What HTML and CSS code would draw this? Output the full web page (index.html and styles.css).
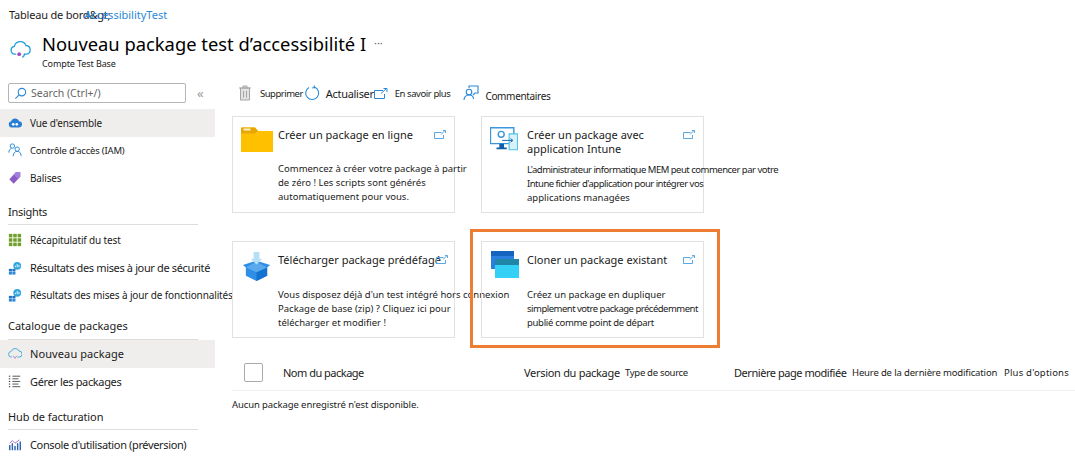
FILE: index.html
```html
<!DOCTYPE html>
<html lang="fr">
<head>
<meta charset="UTF-8" />
<title>Nouveau package test d'accessibilité</title>
<link rel="stylesheet" href="styles.css">
</head>
<body>
<!-- Page header -->
<header class="page-header">
  <div class="crumbs"><span class="crumb-dark">Tableau de bord&amp;gt;</span><a class="crumb-link">AccessibilityTest</a></div>
  <div class="title-row">
    <svg class="title-icon" viewBox="0 0 24 24" width="25" height="21" fill="none"><path d="M7 18.500H5.500a4.500 4.500 0 0 1-.6-8.900 7 7 0 0 1 13.400-1 5 5 0 0 1 .7 9.900h-3" stroke="#1f9fdc" stroke-width="1.500"/><path d="M14 22a4 4 0 0 0 2.400-4" stroke="#1f9fdc" stroke-width="1.500"/><circle cx="10.500" cy="18.500" r="2.200" fill="#a24fc4"/></svg>
    <div>
      <h1>Nouveau package test d’accessibilité I <span class="dots">···</span></h1>
      <div class="subtitle">Compte Test Base</div>
    </div>
  </div>
</header>

<div class="layout">
  <!-- Sidebar -->
  <aside class="sidebar">
    <div class="search-row">
      <div class="search">
        <svg viewBox="0 0 14 14" width="13" height="13" fill="none" stroke="#2b88d8" stroke-width="1.200"><circle cx="8.500" cy="5.500" r="4"/><path d="M5.500 8.500 1.500 12.500"/></svg>
        <span>Search (Ctrl+/)</span>
      </div>
      <span class="collapse">«</span>
    </div>

    <a class="nav-item active first">
      <svg viewBox="0 0 16 16" fill="none"><path d="M4 13a3.500 3.500 0 0 1-.5-6.900A4.800 4.800 0 0 1 12.600 6 3.500 3.500 0 0 1 12.500 13z" fill="#2a7fd4"/><circle cx="6" cy="9.500" r="1.500" fill="#fff"/><circle cx="10" cy="9.500" r="1.500" fill="#fff"/></svg>
      <span class="label-a">Vue d'ensemble</span>
    </a>
    <a class="nav-item">
      <svg viewBox="0 0 16 16" fill="none" stroke="#2b88d8" stroke-width="1.100"><circle cx="5" cy="3.500" r="2.500"/><circle cx="10.500" cy="7" r="2.500"/><path d="M1 11c0-3 1.500-4.500 3-4.500M6 15c0-3.500 2-5.500 4.500-5.500S15 11.500 15 15"/></svg>
      <span class="label-b">Contrôle d'accès (IAM)</span>
    </a>
    <a class="nav-item">
      <svg viewBox="0 0 16 16"><path d="M9 1.500h5v5l-7.500 8-5-5z" fill="#8a5bc7"/><path d="M9 1.500h5v5l-2.500 2.500-5-5z" fill="#a57fdc"/></svg>
      <span class="label-a">Balises</span>
    </a>

    <div class="nav-group group-insights">Insights</div>
    <a class="nav-item">
      <svg viewBox="0 0 16 16" fill="#6f9e2c"><rect x="1" y="1" width="4" height="4"/><rect x="6" y="1" width="4" height="4"/><rect x="11" y="1" width="4" height="4"/><rect x="1" y="6" width="4" height="4"/><rect x="6" y="6" width="4" height="4"/><rect x="11" y="6" width="4" height="4"/><rect x="1" y="11" width="4" height="4"/><rect x="6" y="11" width="4" height="4"/><rect x="11" y="11" width="4" height="4"/></svg>
      <span class="label-a">Récapitulatif du test</span>
    </a>
    <a class="nav-item">
      <svg viewBox="0 0 16 16"><circle cx="10.500" cy="5.500" r="4.500" fill="#32a8e0"/><path d="M8.500 7V5.500M10.500 7V3.500M12.500 7V4.500" stroke="#fff"/><rect x="1" y="9" width="3.500" height="3" fill="#1f6fc4"/><rect x="5" y="9" width="3.500" height="3" fill="#1f6fc4"/><rect x="1" y="12.500" width="3.500" height="3" fill="#2b88d8"/><rect x="5" y="12.500" width="3.500" height="3" fill="#2b88d8"/></svg>
      <span class="label-c">Résultats des mises à jour de sécurité</span>
    </a>
    <a class="nav-item">
      <svg viewBox="0 0 16 16"><circle cx="10.500" cy="5.500" r="4.500" fill="#32a8e0"/><path d="M8.500 7V5.500M10.500 7V3.500M12.500 7V4.500" stroke="#fff"/><rect x="1" y="9" width="3.500" height="3" fill="#1f6fc4"/><rect x="5" y="9" width="3.500" height="3" fill="#1f6fc4"/><rect x="1" y="12.500" width="3.500" height="3" fill="#2b88d8"/><rect x="5" y="12.500" width="3.500" height="3" fill="#2b88d8"/></svg>
      <span class="label-d">Résultats des mises à jour de fonctionnalités</span>
    </a>

    <div class="nav-group group-catalog">Catalogue de packages</div>
    <a class="nav-item active">
      <svg viewBox="0 0 16 16" fill="none"><path d="M4.500 11.500H4a3.200 3.200 0 0 1-.3-6.400 4.700 4.700 0 0 1 8.900-.4 3.400 3.400 0 0 1 .2 6.800h-2" stroke="#45a9dd" stroke-width="1.100"/><path d="M6 10l2 3 2-3" stroke="#b58ad0" stroke-width="1.100"/></svg>
      <span class="label-e">Nouveau package</span>
    </a>
    <a class="nav-item">
      <svg viewBox="0 0 16 16" stroke="#555" stroke-width="1.100"><path d="M5 2.500h9M5 5.500h7M5 8.500h9M5 11.500h7M5 14.500h9"/><path d="M1 2.500h2M1 5.500h2M1 8.500h2M1 11.500h2M1 14.500h2" stroke-dasharray="1.500 .5" stroke="#222"/></svg>
      <span class="label-c">Gérer les packages</span>
    </a>

    <div class="nav-group group-hub">Hub de facturation</div>
    <a class="nav-item">
      <svg viewBox="0 0 16 16"><path d="M2 14V8M5 14V6M8 14V9M11 14V6M14 14V4" stroke="#2a5fb0" stroke-width="1.600"/><path d="M2 6 5 3l3 3 5-4" stroke="#9a5fc9" stroke-width="1" fill="none"/></svg>
      <span class="label-c">Console d'utilisation (préversion)</span>
    </a>
  </aside>

  <!-- Main content -->
  <main class="main">
    <div class="toolbar">
      <span class="tool tool-delete">
        <svg viewBox="0 0 14 16" width="14" height="16" fill="#e3e3e3" stroke="#a6a6a6"><path d="M1 3h12M5 3V1h4v2M2.500 3v12h9V3z"/><path d="M5.500 6v6.500M8.500 6v6.500" fill="none"/></svg>
        <span class="tool-delete-label">Supprimer</span>
      </span>
      <span class="tool tool-refresh">
        <svg viewBox="0 0 16 16" width="16" height="16" fill="none" stroke="#2b88d8" stroke-width="1.100"><path d="M5 2.400A6.500 6.500 0 1 0 10.500 2M10 .5l.5 2-2.200.4"/></svg>
        <span class="tool-refresh-label">Actualiser</span>
      </span>
      <span class="tool tool-learn">
        <svg viewBox="0 0 14 11" width="14" height="11" fill="none" stroke="#2b88d8"><path d="M9 2.500H.5v8h10V6M7 5.500l5.500-5M9.500.5h3.500V4"/></svg>
        <span class="tool-learn-label">En savoir plus</span>
      </span>
      <span class="tool tool-feedback">
        <svg viewBox="0 0 16 16" width="16" height="16" fill="none" stroke="#2b88d8" stroke-width="1.100"><circle cx="6" cy="7" r="2.800"/><path d="M1 15c0-3 2-5 5-5s4.500 2 4.500 4M6 3V1h9v7h-3l-2 2"/></svg>
        <span class="tool-feedback-label">Commentaires</span>
      </span>
    </div>

    <section class="cards">
      <div class="card">
        <div class="card-head">
          <svg class="card-icon" viewBox="0 0 32 26" width="32" height="26"><path d="M0 2.500a1 1 0 0 1 1-1h13l3 3.500h15v21H0z" fill="#ffc000"/><path d="M0 2.500a1 1 0 0 1 1-1h13l3 3.500-3 2.500H0z" fill="#e6a700"/><rect x="2.500" y="2.500" width="7" height="2" fill="#fff2c4"/></svg>
          <h2>Créer un package en ligne</h2>
          <svg class="ext" viewBox="0 0 12 9" width="12" height="9" fill="none" stroke="#5aa7e0"><path d="M7.500 2.500H.5v6h9V5M7 4.500 10.500 1M9 .5h2.500V3"/></svg>
        </div>
        <p>Commencez à créer votre package à partir<br>de zéro ! Les scripts sont générés<br>automatiquement pour vous.</p>
      </div>

      <div class="card">
        <div class="card-head">
          <svg class="card-icon" viewBox="0 0 30 27" width="28" height="26"><path d="M.5 1.500h25v17H.5z" fill="#fff" stroke="#3a96dd" stroke-width="1.500"/><circle cx="12" cy="8.500" r="3.200" fill="#fff" stroke="#3a96dd" stroke-width="1.500"/><path d="M10 18.500h5v4h3v2H7v-2h3z" fill="#0f5fa8"/><path d="M20.500 8h9v17h-9z" fill="#d8f1fb" stroke="#4fc3e8" stroke-width="1.200"/><path d="M13 15h11M22 13l2.500 2-2.500 2" stroke="#0f5fa8" fill="none"/></svg>
          <h2>Créer un package avec<br>application Intune</h2>
          <svg class="ext" viewBox="0 0 12 9" width="12" height="9" fill="none" stroke="#5aa7e0"><path d="M7.500 2.500H.5v6h9V5M7 4.500 10.500 1M9 .5h2.500V3"/></svg>
        </div>
        <p class="p-low"><span class="tight">L'administrateur informatique MEM peut commencer par votre<br>Intune fichier d'application pour intégrer vos</span><br>applications managées</p>
      </div>

      <div class="card">
        <div class="card-head">
          <svg class="card-icon" viewBox="0 0 32 32" width="31" height="31"><path d="M16 10 30 14.500 27 17v8.500L16 31 5 25.500V17L2 14.500z" fill="#2f8ee6"/><path d="M16 17v14l11-5.500V17z" fill="#1273d1"/><path d="M5 17l11 5 11-5-11-6z" fill="#5aa9ec"/><path d="M13 1h6v7h3l-6 6-6-6h3z" fill="#b6def7"/></svg>
          <h2>Télécharger package prédéfagé</h2>
          <svg class="ext ext-near" viewBox="0 0 12 9" width="12" height="9" fill="none" stroke="#5aa7e0"><path d="M7.500 2.500H.5v6h9V5M7 4.500 10.500 1M9 .5h2.500V3"/></svg>
        </div>
        <p class="p-low">Vous disposez déjà d'un test intégré hors connexion<br>Package de base (zip) ? Cliquez ici pour<br>télécharger et modifier !</p>
      </div>

      <div class="card">
        <div class="card-head">
          <svg class="card-icon" viewBox="0 0 28 27" width="30" height="27"><rect x="0" y="0" width="23" height="18" fill="#2b7fe0"/><rect x="0" y="0" width="23" height="5" fill="#1565c0"/><rect x="4" y="8" width="24" height="19" fill="#35d0f5"/><rect x="4" y="8" width="24" height="6" fill="#1f86a8"/></svg>
          <h2>Cloner un package existant</h2>
          <svg class="ext" viewBox="0 0 12 9" width="12" height="9" fill="none" stroke="#5aa7e0"><path d="M7.500 2.500H.5v6h9V5M7 4.500 10.500 1M9 .5h2.500V3"/></svg>
        </div>
        <p class="p-low">Créez un package en dupliquer<br><span class="tight">simplement votre package précédemment</span><br><span class="tight-sm">publié comme point de départ</span></p>
        <div class="callout"></div>
      </div>
    </section>

    <section class="table-head">
      <span class="check"></span>
      <span class="col-name">Nom du package</span>
      <span class="col-version">Version du package</span>
      <span class="col-type">Type de source</span>
      <span class="col-page">Dernière page modifiée</span>
      <span class="col-time">Heure de la dernière modification</span>
      <span class="col-more">Plus d'options</span>
    </section>
    <div class="empty">Aucun package enregistré n'est disponible.</div>
  </main>
</div>
</body>
</html>
```

FILE: styles.css
```css
/* General */
html, body {
  height: 460px;
  overflow: hidden;
}
body {
  margin: 0;
  font-family: "Noto Sans", "Open Sans", sans-serif;
  color: #1b1b1b;
  background-color: #fff;
}

/* Header */
.page-header {
  height: 76px;
  padding: 7px 0 0 8px;
  box-sizing: border-box;
}
.crumbs {
  padding-left: 1px;
  font-size: 11px;
  line-height: 16px;
  white-space: nowrap;
}
.crumb-dark {
  letter-spacing: -0.2px;
}
.crumb-link {
  margin-left: -26px;
  color: #2b88d8;
}
.title-row {
  display: flex;
  align-items: flex-start;
  margin-top: 8px;
}
.title-icon {
  margin: 7px 9px 0 0;
}
h1 {
  margin: 0;
  font-size: 18.350px;
  font-weight: 400;
  line-height: 24px;
  color: #000;
  white-space: nowrap;
}
.dots {
  margin-left: 3px;
  color: #666;
  font-size: 11px;
  vertical-align: 4px;
}
.subtitle {
  font-size: 9px;
  line-height: 11px;
  margin-top: 2px;
  letter-spacing: -0.1px;
}

/* Layout */
.layout {
  display: flex;
}
.sidebar {
  width: 215px;
  flex-shrink: 0;
}
.main {
  flex: 1;
  padding-left: 17px;
}

/* Sidebar */
.search-row {
  display: flex;
  align-items: center;
  padding: 7px 0 0 8px;
}
.search {
  display: flex;
  align-items: center;
  gap: 4px;
  width: 178px;
  height: 20px;
  box-sizing: border-box;
  padding-left: 5px;
  border: 1px solid #b5b5b5;
  border-radius: 2px;
  font-size: 10.500px;
  color: #666;
}
.collapse {
  margin-left: 11px;
  font-size: 13px;
  color: #999;
}
.nav-item {
  display: flex;
  align-items: center;
  gap: 8px;
  height: 27.500px;
  padding-left: 8px;
  white-space: nowrap;
}
.nav-item.first {
  margin-top: 6px;
}
.nav-item.active {
  background-color: #efeeec;
}
.nav-item svg {
  width: 14px;
  height: 14px;
  flex-shrink: 0;
}
.label-a {
  font-size: 10px;
  letter-spacing: -0.15px;
}
.label-b {
  font-size: 9.500px;
  letter-spacing: -0.2px;
}
.label-c {
  font-size: 11px;
  letter-spacing: -0.36px;
}
.label-d {
  font-size: 10px;
  letter-spacing: -0.13px;
}
.label-e {
  font-size: 11px;
  letter-spacing: 0.1px;
}
.nav-group {
  margin: 0 17px 0 8px;
  box-sizing: border-box;
  border-bottom: 1px solid #ddd;
  font-size: 11px;
  line-height: 16px;
}
.group-insights {
  margin-top: 12px;
  margin-bottom: 2px;
  height: 21px;
  letter-spacing: -0.3px;
}
.group-catalog {
  margin-top: 9px;
  height: 22px;
}
.group-hub {
  margin-top: 14px;
  margin-bottom: 1px;
  height: 21px;
  letter-spacing: -0.1px;
}

/* Toolbar */
.toolbar {
  display: flex;
  align-items: center;
  height: 34px;
  white-space: nowrap;
  padding-left: 6px;
}
.tool {
  display: flex;
  align-items: center;
  gap: 8px;
}
.tool-refresh {
  gap: 6px;
}
.tool-learn {
  gap: 7px;
}
.tool-feedback {
  margin-left: 13px;
  gap: 6px;
}
.tool-delete-label {
  font-size: 9.500px;
  letter-spacing: -0.5px;
  margin-right: 1px;
}
.tool-refresh-label {
  font-size: 11px;
  letter-spacing: -0.3px;
}
.tool-learn-label {
  font-size: 9.500px;
  letter-spacing: -0.43px;
}
.tool-feedback-label {
  font-size: 10px;
  letter-spacing: -0.33px;
  margin-top: 5px;
}

/* Cards */
.cards {
  display: grid;
  grid-template-columns: 223px 223px;
  grid-auto-rows: 97px;
  column-gap: 26px;
  row-gap: 28px;
  margin-top: 6px;
}
.card {
  position: relative;
  border: 1px solid #e1e1e1;
  box-sizing: border-box;
  padding: 11px 8px 0 8px;
}
.card-head {
  display: grid;
  grid-template-columns: 37px 1fr auto;
  align-items: start;
  height: 34px;
}
.card-icon {
  margin-top: -2px;
}
.card h2 {
  margin: 0;
  min-width: 0;
  font-size: 11px;
  font-weight: 400;
  line-height: 14px;
  white-space: nowrap;
  color: #1b1b1b;
}
.ext {
  margin-top: 2px;
}
.ext-near {
  margin-right: -2px;
}
.card p {
  margin: 0 0 0 37px;
  font-size: 9.500px;
  line-height: 14px;
  white-space: nowrap;
}
.card p.p-low {
  margin-top: 1px;
}
.tight {
  letter-spacing: -0.5px;
}
.tight-sm {
  letter-spacing: -0.3px;
}
.callout {
  position: absolute;
  left: -12px;
  top: -13px;
  width: 244px;
  height: 113px;
  box-sizing: content-box;
  border: 3px solid #ed7d31;
}

/* Table */
.table-head {
  display: flex;
  align-items: center;
  height: 35px;
  margin-top: 17px;
  border-bottom: 1px solid #efefef;
  font-size: 11px;
  white-space: nowrap;
}
.check {
  width: 17px;
  height: 17px;
  margin-left: 12px;
  border: 1px solid #aaa;
  border-radius: 2px;
  flex-shrink: 0;
}
.col-name {
  margin-left: 20px;
  width: 241px;
  letter-spacing: -0.5px;
}
.col-type, .col-time, .col-more {
  font-size: 9.500px;
}
.col-version {
  width: 101px;
  letter-spacing: -0.3px;
}
.col-type {
  width: 109px;
  letter-spacing: -0.3px;
}
.col-page {
  width: 118px;
  letter-spacing: -0.45px;
}
.col-time {
  width: 152px;
  letter-spacing: -0.15px;
}
.col-more {
  letter-spacing: 0.2px;
}
.empty {
  margin-top: 7px;
  font-size: 9.500px;
  letter-spacing: -0.1px;
}
```
